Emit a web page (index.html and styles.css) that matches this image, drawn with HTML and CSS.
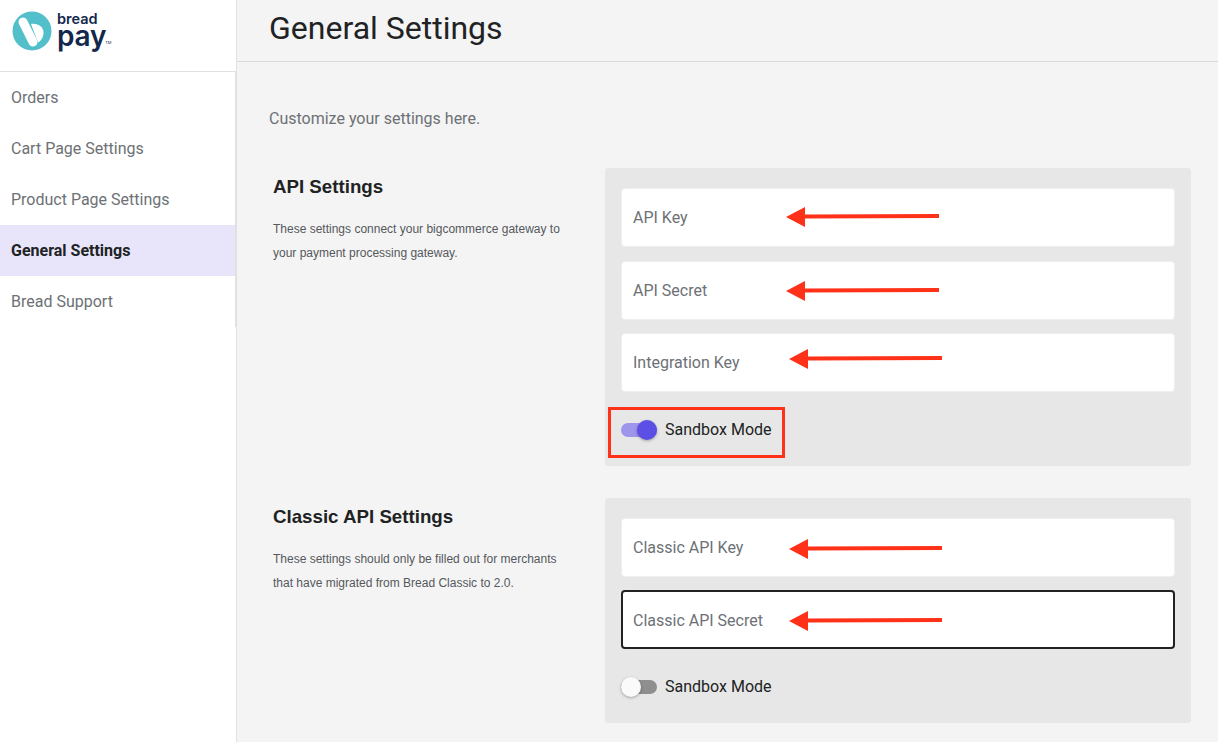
FILE: index.html
```html
<!DOCTYPE html>
<html lang="en">
<head>
<meta charset="utf-8">
<title>General Settings</title>
<link rel="stylesheet" href="styles.css">
</head>
<body>
<div class="app">
  <aside class="sidebar">
    <div class="logo">
      <svg class="logo-mark" width="40" height="40" viewBox="0 0 40 40"><circle cx="20" cy="20" r="19.500" fill="#52bfcb"/><path d="M19 13 C26 12 31.500 16 31.500 21.500 C31.500 26 29 30 26 31.500 Z" fill="#fff"/><path d="M11 11 L21 31" stroke="#fff" stroke-width="9" stroke-linecap="round" fill="none"/></svg>
      <div class="logo-text">
        <span class="logo-bread">bread</span>
        <span class="logo-pay">pay<span class="logo-tm">TM</span></span>
      </div>
    </div>
    <nav class="nav">
      <a class="nav-item">Orders</a>
      <a class="nav-item">Cart Page Settings</a>
      <a class="nav-item">Product Page Settings</a>
      <a class="nav-item active">General Settings</a>
      <a class="nav-item">Bread Support</a>
    </nav>
  </aside>
  <main class="main">
    <header class="header"><h1>General Settings</h1></header>
    <div class="content">
      <p class="intro">Customize your settings here.</p>
      <section class="section first">
        <div class="info">
          <h2>API Settings</h2>
          <p>These settings connect your bigcommerce gateway to your payment processing gateway.</p>
        </div>
        <div class="panel">
          <div class="field">API Key<svg class="arrow a-key" width="154" height="22" viewBox="0 0 154 22"><path d="M153 8 L19 8.500 L19 1 L0 11 L19 21 L19 12.500 L153 12 Z" fill="#ff3219"/></svg></div>
          <div class="field tight">API Secret<svg class="arrow a-secret" width="154" height="22" viewBox="0 0 154 22"><path d="M153 8 L19 8.500 L19 1 L0 11 L19 21 L19 12.500 L153 12 Z" fill="#ff3219"/></svg></div>
          <div class="field">Integration Key<svg class="arrow a-integration" width="154" height="22" viewBox="0 0 154 22"><path d="M153 8 L19 8.500 L19 1 L0 11 L19 21 L19 12.500 L153 12 Z" fill="#ff3219"/></svg></div>
          <div class="toggle-row on">
            <span class="switch"><span class="track"></span><span class="thumb"></span></span>
            <span class="toggle-label">Sandbox Mode</span>
            <span class="highlight"></span>
          </div>
        </div>
      </section>
      <section class="section second">
        <div class="info">
          <h2>Classic API Settings</h2>
          <p>These settings should only be filled out for merchants that have migrated from Bread Classic to 2.0.</p>
        </div>
        <div class="panel">
          <div class="field tight">Classic API Key<svg class="arrow a-classic" width="154" height="22" viewBox="0 0 154 22"><path d="M153 8 L19 8.500 L19 1 L0 11 L19 21 L19 12.500 L153 12 Z" fill="#ff3219"/></svg></div>
          <div class="field tight focused">Classic API Secret<svg class="arrow a-focused" width="154" height="22" viewBox="0 0 154 22"><path d="M153 8 L19 8.500 L19 1 L0 11 L19 21 L19 12.500 L153 12 Z" fill="#ff3219"/></svg></div>
          <div class="toggle-row off">
            <span class="switch"><span class="track"></span><span class="thumb"></span></span>
            <span class="toggle-label">Sandbox Mode</span>
          </div>
        </div>
      </section>
    </div>
  </main>
</div>
</body>
</html>
```

FILE: styles.css
```css
* { box-sizing: border-box; }
html, body { margin: 0; padding: 0; height: 100%; overflow: hidden; }
body { font-family: Roboto, "Liberation Sans", sans-serif; background: #f4f4f4; color: #202223; }
.app { display: flex; height: 742px; }

.sidebar { width: 236px; flex: none; background: #fff; }
.logo { height: 72px; border-bottom: 1px solid #e1e1e1; padding: 11px 0 0 12px; display: flex; align-items: flex-start; gap: 5px; }
.logo-mark { display: block; flex: none; }
.logo-text { display: flex; flex-direction: column; color: #13284c; font-family: Inter, sans-serif; font-weight: 600; }
.logo-bread { font-size: 14.500px; line-height: 14px; margin-top: 1px; }
.logo-pay { font-size: 28px; line-height: 20px; letter-spacing: -.2px; }
.logo-tm { font-size: 4px; line-height: 4px; font-weight: 400; letter-spacing: 0; margin-left: -1px; vertical-align: 2px; }

.nav { display: flex; flex-direction: column; border-right: 1px solid #e1e1e1; }
.nav-item { height: 51px; padding-left: 11px; display: flex; align-items: center; font-size: 16px; color: #6d7175; }
.nav-item.active { background: #e8e5fb; color: #202223; font-weight: 700; }

.main { flex: 1; min-width: 0; border-left: 1px solid #e1e1e1; }
.header { height: 62px; border-bottom: 1px solid #d9d9d9; padding-left: 32px; }
.header h1 { margin: 0; font-size: 32px; line-height: 56px; font-weight: 400; color: #202223; }
.content { padding: 47px 27px 0 32px; }
.intro { margin: 0 0 39px; font-size: 16px; line-height: 20px; color: #6d7175; }

.section { display: flex; }
.section + .section { margin-top: 32px; }
.info { width: 336px; flex: none; padding: 7px 0 0 4px; font-family: "Liberation Sans", Arial, sans-serif; }
.info h2 { margin: 0 0 18px; font-size: 18.720px; line-height: 24px; font-weight: 700; color: #202223; }
.info p { margin: 0; width: 296px; font-size: 12px; line-height: 24px; color: #55585c; }

.panel { flex: 1; background: #e7e7e7; border-radius: 3px; padding: 20px 16px 0; display: flex; flex-direction: column; }
.first .panel { height: 298px; }
.second .panel { height: 225px; }
.field { position: relative; height: 59px; flex: none; background: #fff; border: 1px solid #efefef; border-radius: 4px; padding-left: 11px; display: flex; align-items: center; font-size: 16px; color: #6d7175; margin-bottom: 14px; }
.field.tight { margin-bottom: 13px; }
.field.focused { border: 2px solid #202223; padding: 2px 0 0 10px; }
.arrow { position: absolute; display: block; left: 164px; }
.a-key { top: 17px; }
.a-secret { top: 18px; }
.a-integration { left: 167px; top: 14px; }
.a-classic { left: 167px; top: 19px; }
.a-focused { left: 166px; top: 18px; }

.toggle-row { position: relative; display: flex; align-items: center; gap: 8px; height: 24px; margin-top: 12px; }
.second .toggle-row { margin-top: 13px; }
.switch { position: relative; width: 36px; height: 20px; flex: none; }
.track { position: absolute; left: 0; right: 0; top: 3px; height: 14px; border-radius: 7px; }
.thumb { position: absolute; top: 0; width: 20px; height: 20px; border-radius: 50%; box-shadow: 0 1px 3px rgba(0,0,0,.3); }
.on .track { background: #9e95ec; }
.on .thumb { right: 0; background: #5b4fe6; }
.off .track { background: #8f8f8f; }
.off .thumb { left: 0; background: #fafafa; }
.toggle-label { font-size: 16px; margin-bottom: 2px; color: #202223; }
.highlight { position: absolute; left: -13px; top: -11px; width: 177px; height: 51px; border: 3px solid #ff3219; }
```
